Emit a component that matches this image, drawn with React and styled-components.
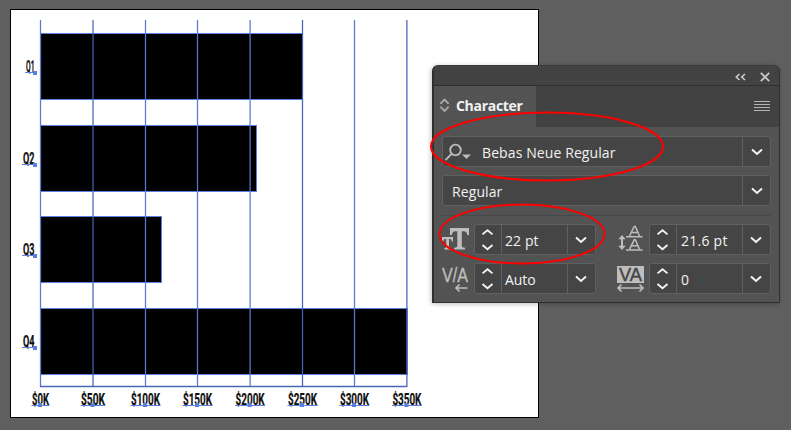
import React from "react";
import styled, { createGlobalStyle, css } from "styled-components";

const GlobalStyle = createGlobalStyle`
  html, body { margin: 0; padding: 0; background: #5f5f5f; overflow: hidden; }
  * { box-sizing: border-box; }
`;

const Workspace = styled.main`
  position: relative;
  width: 791px;
  height: 430px;
  padding: 9px 0 0 10px;
  background: #5f5f5f;
  overflow: hidden;
  font-family: "Open Sans", "Noto Sans", sans-serif;
`;

const Artboard = styled.section`
  width: 529px;
  height: 409px;
  background: #fff;
  border: 1px solid #000;
`;

const Chart = styled.svg`
  display: block;
  width: 527px;
  height: 407px;
`;

const ChartLabel = styled.text`
  font-family: Roboto, "Liberation Sans", sans-serif;
  font-size: 16px;
  font-weight: 700;
  fill: #101010;
  stroke: #101010;
  stroke-width: 0.25px;
`;

const Panel = styled.aside`
  position: absolute;
  left: 432px;
  top: 65px;
  width: 348px;
  height: 238px;
  display: flex;
  flex-direction: column;
  border: 1px solid #2f2f2f;
  border-left-width: 2px;
  border-top-color: #3b3b3b;
  border-radius: 6px 6px 0 0;
  background: #535353;
  box-shadow: -1px 1px 5px rgba(0, 0, 0, 0.25);
  color: #f2f2f2;
`;

const TitleBar = styled.header`
  flex: 0 0 20px;
  display: flex;
  align-items: center;
  justify-content: flex-end;
  gap: 14px;
  padding: 3px 9px 0 0;
  background: #434343;
  border-bottom: 1px solid #303030;
  border-radius: 5px 5px 0 0;
`;

const TabBar = styled.div`
  flex: 0 0 41px;
  display: flex;
  align-items: center;
  justify-content: space-between;
  padding-right: 9px;
  background: #424242;
`;

const Tab = styled.div`
  width: 102px;
  height: 41px;
  display: flex;
  align-items: center;
  gap: 7px;
  padding: 0 0 3px 6px;
  background: #535353;
  font-size: 14px;
  font-weight: 700;
  letter-spacing: -0.3px;
`;

const Body = styled.div`
  display: flex;
  flex-direction: column;
  padding: 9px 8px 0;
`;

const Field = styled.div`
  height: 31px;
  display: flex;
  align-items: stretch;
  flex: 1;
  border: 1px solid #606060;
  border-radius: 3px;
  background: #454545;
`;

const WideRow = styled.div`
  display: flex;
  height: 31px;
  margin-bottom: 8px;
`;

const Value = styled.span`
  flex: 1;
  display: flex;
  align-items: center;
  padding: 2px 0 0 ${(p) => p.$inset ?? 9}px;
  font-size: 14px;
  line-height: 20px;
  letter-spacing: ${(p) => p.$tracking ?? 0}px;
  white-space: nowrap;
`;

const cell = css`
  display: flex;
  align-items: center;
  justify-content: center;
`;

const SearchCell = styled.span`
  ${cell}
  width: 30px;
  padding-right: 2px;
`;

const Arrow = styled.span`
  ${cell}
  width: 28px;
  padding-right: ${(p) => (p.$compact ? 2 : 0)}px;
  border-left: 1px solid #606060;
`;

const Stepper = styled.span`
  ${cell}
  width: 27px;
  padding-right: 2px;
  border-right: 1px solid #606060;
`;

const Divider = styled.hr`
  width: 100%;
  height: 1px;
  margin: 1px 0 8px;
  border: 0;
  background: #484848;
`;

const Metrics = styled.div`
  display: grid;
  grid-template-columns: 154px 154px;
  column-gap: 21px;
  row-gap: 8px;
`;

const Metric = styled.div`
  display: flex;
  height: 31px;
`;

const MetricIcon = styled.svg`
  flex: 0 0 32px;
  width: 32px;
  height: 31px;
  overflow: visible;
`;

const Glyph = styled.text`
  font-family: "Liberation Sans", sans-serif;
  font-size: ${(p) => p.$size}px;
  fill: ${(p) => p.$color ?? "#bebebe"};
`;

const Annotations = styled.svg`
  position: absolute;
  left: 0;
  top: 0;
  pointer-events: none;
`;

const gridX = [40, 92.5, 145, 197, 249.6, 302, 354, 406.4];
const labels = ["$0K", "$50K", "$100K", "$150K", "$200K", "$250K", "$300K", "$350K"];
const quarters = [
  { name: "Q1", y: 33, end: 302, left: 26, base: 73 },
  { name: "Q2", y: 125, end: 256, left: 23, base: 165 },
  { name: "Q3", y: 216, end: 161, left: 23, base: 256 },
  { name: "Q4", y: 308, end: 407, left: 23, base: 348 },
];
const blue = "#5b7fe0";

function BarChart() {
  return (
    <Chart viewBox="11 10 527 407">
      {quarters.map((q) => (
        <rect key={q.name} x="40.5" y={q.y + 0.5} width={q.end - 40} height="66" fill="#000" stroke={blue} />
      ))}
      {gridX.map((x, i) => (
        <path key={x} d={`M${x + 0.5} 20V387`} stroke={i % 2 && i !== 3 ? "#4563b7" : "#5a7ad0"} strokeWidth="1.25" />
      ))}
      <path d="M40 386.5H407" stroke="#4868ba" strokeWidth="1.5" />
      {quarters.map((q) => (
        <g key={q.name}>
          <ChartLabel x={q.left} y={q.base - 1} textLength={34.5 - q.left} lengthAdjust="spacingAndGlyphs">
            {q.name}
          </ChartLabel>
          <path d={`M${q.left - 1} ${q.base - 0.5}H36`} stroke={blue} />
          <rect x="33" y={q.base - 2} width="4" height="4" fill={blue} />
        </g>
      ))}
      {labels.map((t, i) => {
        const w = [17, 24, 29][t.length - 3];
        const x = gridX[i];
        return (
          <g key={t}>
            <ChartLabel x={x + 0.5 - w / 2} y="405" textLength={w} lengthAdjust="spacingAndGlyphs">
              {t}
            </ChartLabel>
            <path d={`M${x - w / 2} 405.5h${w + 1}`} stroke={blue} />
            <rect x={x - 2} y="403" width="4" height="4" fill={blue} />
          </g>
        );
      })}
    </Chart>
  );
}

function DropArrow({ compact }) {
  return (
    <Arrow $compact={compact}>
      <svg width="12" height="8" viewBox="0 0 12 8" fill="none" stroke="#f4f4f4" strokeWidth="2">
        <path d="M1 1.5 6 6 11 1.5" />
      </svg>
    </Arrow>
  );
}

function StepArrows() {
  return (
    <Stepper>
      <svg width="13" height="25" viewBox="0 0 13 25" fill="none" stroke="#f4f4f4" strokeWidth="1.8">
        <path d="M1.5 7.4 6.5 3.2 11.5 7.4M1.5 18 6.5 22.2 11.5 18" />
      </svg>
    </Stepper>
  );
}

function FontSizeIcon() {
  return (
    <MetricIcon viewBox="0 0 32 31" fill="#bebebe">
      <path d="M8 4H27V11H25.2Q24.8 7.2 22 7.2H19.8V22.3Q19.8 23.7 23 23.8V25.5H12.2V23.8Q15.3 23.7 15.3 22.3V7.2H13.2Q10.2 7.2 9.8 11H8Z" />
      <path d="M0 13H11V17.5H9.7Q9.6 15 8.2 15H7V23Q7 24 8.6 24V25.5H2.5V24Q4.2 24 4.2 23V15H3Q1.4 15 1.3 17.5H0Z" />
    </MetricIcon>
  );
}

function LeadingIcon() {
  return (
    <MetricIcon viewBox="0 0 32 31" fill="none" stroke="#bebebe" strokeWidth="1.5">
      <path d="M9 12.7H25.5M9 26H25.5" />
      <path d="M12.5 12 17.2 2.5H18.3L22.5 12M14.2 8.5H21M12.5 25.3 17.2 15.8H18.3L22.5 25.3M14.2 21.8H21" />
      <path d="M5 13V24" strokeWidth="2" />
      <path d="M1.3 15.2 5 11 8.7 15.2ZM1.3 21.8 5 26 8.7 21.8Z" fill="#bebebe" stroke="none" />
    </MetricIcon>
  );
}

function KerningIcon() {
  return (
    <MetricIcon viewBox="0 0 32 31">
      <Glyph x="0" y="18.5" $size={20.5} stroke="#bebebe" strokeWidth=".3" textLength="26" lengthAdjust="spacingAndGlyphs">V/A</Glyph>
      <path d="M14 25H25.5M17.5 21.5 14 25 17.5 28.5" fill="none" stroke="#bebebe" strokeWidth="1.7" />
    </MetricIcon>
  );
}

function TrackingIcon() {
  return (
    <MetricIcon viewBox="0 0 32 31">
      <rect y="3" width="27" height="17" fill="#bebebe" />
      <Glyph x="2" y="18" $size={18} $color="#444" stroke="#444" strokeWidth=".4" textLength="23" lengthAdjust="spacingAndGlyphs">VA</Glyph>
      <path d="M1 25H26M4.5 21.5 1 25 4.5 28.5M22.5 21.5 26 25 22.5 28.5" fill="none" stroke="#bebebe" strokeWidth="1.7" />
    </MetricIcon>
  );
}

function MetricField({ icon, value, inset, tracking }) {
  return (
    <Metric>
      {icon}
      <Field>
        <StepArrows />
        <Value $inset={inset} $tracking={tracking}>{value}</Value>
        <DropArrow compact />
      </Field>
    </Metric>
  );
}

function CharacterPanel() {
  return (
    <Panel>
      <TitleBar>
        <svg width="11" height="8" viewBox="0 0 11 8" fill="none" stroke="#d0d0d0" strokeWidth="1.5">
          <path d="M4.5 1 1.2 4 4.5 7M10 1 6.7 4 10 7" />
        </svg>
        <svg width="10" height="10" viewBox="0 0 10 10" stroke="#c8c8c8" strokeWidth="1.8">
          <path d="M.8.8 9.2 9.2M9.2.8.8 9.2" />
        </svg>
      </TitleBar>
      <TabBar>
        <Tab>
          <svg width="9" height="14" viewBox="0 0 9 14" fill="none" stroke="#aaa" strokeWidth="1.8">
            <path d="M1 6V5L4.5 1.5 8 5V6M1 8.5V9.5L4.5 13 8 9.5V8.5" />
          </svg>
          Character
        </Tab>
        <svg width="16" height="13" viewBox="0 0 16 13" stroke="#b5b5b5">
          <path d="M0 1.5H16M0 4.5H16M0 7.5H16M0 10.5H16" strokeWidth="1.2" />
        </svg>
      </TabBar>
      <Body>
        <WideRow>
          <Field>
            <SearchCell>
              <svg width="27" height="18" viewBox="0 0 27 18" fill="none" stroke="#bbb" strokeWidth="1.8">
                <circle cx="11.5" cy="7" r="5.3" />
                <path d="M7.5 11 1.5 17" />
                <path d="M18 11.5H27L22.5 16Z" fill="#bbb" stroke="none" />
              </svg>
            </SearchCell>
            <Value $tracking={0.1}>Bebas Neue Regular</Value>
            <DropArrow />
          </Field>
        </WideRow>
        <WideRow>
          <Field>
            <Value $tracking={0.1}>Regular</Value>
            <DropArrow />
          </Field>
        </WideRow>
        <Divider />
        <Metrics>
          <MetricField icon={<FontSizeIcon />} value="22 pt" inset={3} tracking={0.1} />
          <MetricField icon={<LeadingIcon />} value="21.6 pt" inset={4} tracking={0.25} />
          <MetricField icon={<KerningIcon />} value="Auto" inset={3} tracking={-0.1} />
          <MetricField icon={<TrackingIcon />} value="0" inset={4} />
        </Metrics>
      </Body>
    </Panel>
  );
}

export default function App() {
  return (
    <>
      <GlobalStyle />
      <Workspace>
        <Artboard>
          <BarChart />
        </Artboard>
        <CharacterPanel />
        <Annotations width="791" height="430" fill="none" stroke="#ff0000" strokeWidth="2">
          <ellipse cx="547" cy="146.5" rx="116" ry="34" />
          <ellipse cx="522" cy="234" rx="82.5" ry="29.5" />
        </Annotations>
      </Workspace>
    </>
  );
}
